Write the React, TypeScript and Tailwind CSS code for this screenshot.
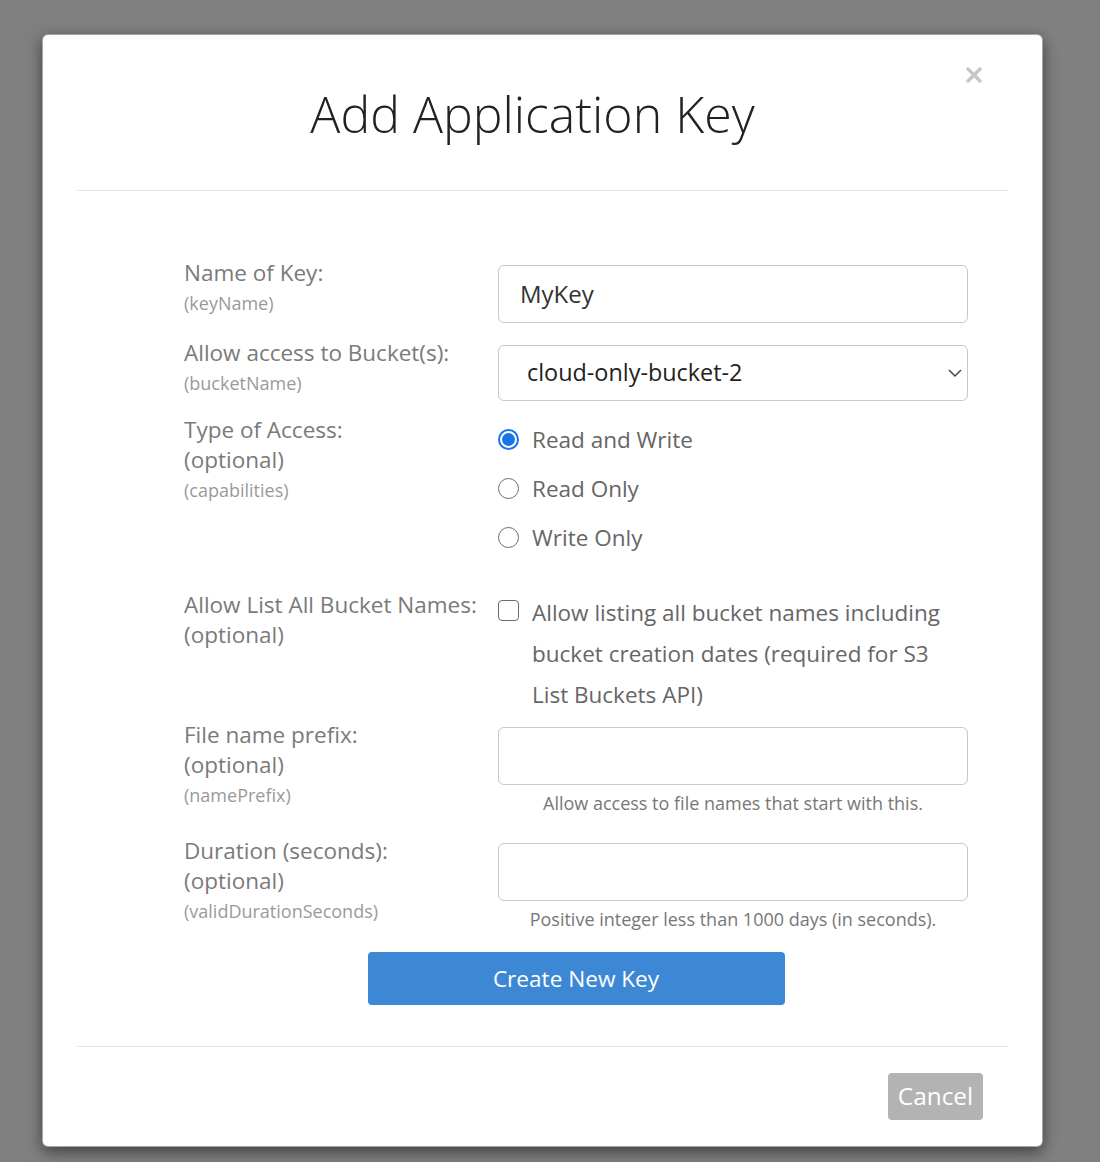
import React from 'react';

function Radio({ checked, label }: { checked?: boolean; label: string }) {
  return (
    <div className="flex h-[49px] items-center">
      {checked ? (
        <span className="flex h-[21px] w-[21px] items-center justify-center rounded-full border-[2px] border-[#1a73e8]">
          <span className="h-[13px] w-[13px] rounded-full bg-[#1a73e8]" />
        </span>
      ) : (
        <span className="h-[21px] w-[21px] rounded-full border-[1.5px] border-[#6b6b6b]" />
      )}
      <span className="ml-[13px] text-[22.5px] text-[#666]">{label}</span>
    </div>
  );
}

function Label({ title, optional, field }: { title: string; optional?: boolean; field?: string }) {
  return (
    <div className="w-[314px] shrink-0 text-[#7a7a7a]">
      <div className="text-[22.5px] leading-[30px]">{title}</div>
      {optional && <div className="text-[22.5px] leading-[30px]">(optional)</div>}
      {field && <div className="text-[18px] leading-[30px] text-[#9a9a9a]">({field})</div>}
    </div>
  );
}

function TextBox({ value }: { value?: string }) {
  return (
    <div className="mt-[7px] flex h-[58px] w-[470px] items-center rounded-[6px] border border-[#c8c8c8] px-[21px] text-[24px] text-[#333]">
      {value}
    </div>
  );
}

export default function App(): JSX.Element {
  return (
    <div className="min-h-[1162px] bg-[#808080] pl-[42px] pt-[34px] font-['Open_Sans',sans-serif]">
      <div className="relative w-[1001px] rounded-[6px] border border-[rgba(0,0,0,0.35)] bg-white shadow-[0_5px_15px_rgba(0,0,0,0.5)]">
        <button className="absolute right-[56px] top-[28px] p-1" aria-label="close">
          <svg width="16" height="16" viewBox="0 0 16 16">
            <path d="M2 2L14 14M14 2L2 14" stroke="#c6c6c6" strokeWidth="3.4" strokeLinecap="round" />
          </svg>
        </button>

        <div className="mx-[34px] flex h-[156px] items-center justify-center border-b border-[#e5e5e5] pr-[20px] pt-[2px]">
          <h1 className="text-[50px] font-light leading-none text-[#222]">Add Application Key</h1>
        </div>

        <div className="ml-[141px] w-[784px] pt-[67px]">
          <div className="flex">
            <Label title="Name of Key:" field="keyName" />
            <TextBox value="MyKey" />
          </div>

          <div className="mt-[15px] flex">
            <Label title="Allow access to Bucket(s):" field="bucketName" />
            <div className="mt-[7px] flex h-[56px] w-[470px] items-center justify-between rounded-[6px] border border-[#c8c8c8] pl-[28px] pr-[4px] text-[23.4px] text-[#222]">
              <span>cloud-only-bucket-2</span>
              <svg width="16" height="10" viewBox="0 0 16 10">
                <path d="M2 2L8 8L14 2" fill="none" stroke="#444" strokeWidth="1.5" />
              </svg>
            </div>
          </div>

          <div className="mt-[14px] flex">
            <Label title="Type of Access:" optional field="capabilities" />
            <div className="flex flex-col">
              <Radio checked label="Read and Write" />
              <Radio label="Read Only" />
              <Radio label="Write Only" />
            </div>
          </div>

          <div className="mt-[28px] flex">
            <Label title="Allow List All Bucket Names:" optional />
            <div className="mt-[2px] flex w-[470px] items-start">
              <span className="mt-[8px] h-[21px] w-[21px] shrink-0 rounded-[4px] border-[1.5px] border-[#6b6b6b]" />
              <span className="ml-[13px] text-[22.5px] leading-[41px] text-[#666]">
                Allow listing all bucket names including bucket creation dates (required for S3 List Buckets API)
              </span>
            </div>
          </div>

          <div className="mt-[5px] flex">
            <Label title="File name prefix:" optional field="namePrefix" />
            <div className="flex flex-col">
              <TextBox />
              <div className="mt-[6px] text-center text-[18px] leading-[24px] text-[#777]">
                Allow access to file names that start with this.
              </div>
            </div>
          </div>

          <div className="mt-[21px] flex">
            <Label title="Duration (seconds):" optional field="validDurationSeconds" />
            <div className="flex flex-col">
              <TextBox />
              <div className="mt-[6px] text-center text-[18px] leading-[24px] text-[#777]">
                Positive integer less than 1000 days (in seconds).
              </div>
            </div>
          </div>

          <button className="mx-auto mt-[21px] flex h-[53px] w-[417px] items-center justify-center rounded-[4px] bg-[#3d88d4] text-[22.6px] text-white">
            Create New Key
          </button>
        </div>

        <div className="mx-[34px] mt-[41px] flex justify-end border-t border-[#e5e5e5] pb-[26px] pr-[25px] pt-[26px]">
          <button className="h-[47px] w-[95px] rounded-[4px] bg-[#b3b3b3] text-[24.4px] text-white">Cancel</button>
        </div>
      </div>
    </div>
  );
}
